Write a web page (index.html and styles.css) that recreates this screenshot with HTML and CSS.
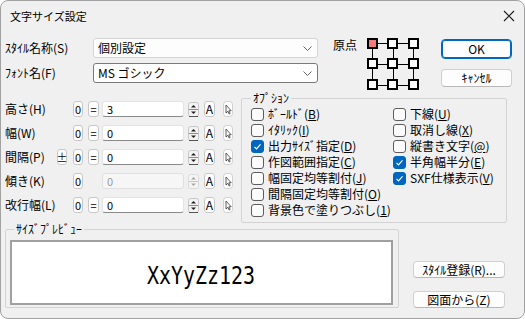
FILE: index.html
```html
<!DOCTYPE html>
<html lang="ja">
<head>
    <meta charset="UTF-8">
    <title>文字サイズ設定</title>
    <link rel="stylesheet" href="styles.css">
</head>
<body>
<div class="window">
    <div class="titlebar">
        <span class="title">文字サイズ設定</span>
        <svg class="close" width="12" height="12" viewBox="0 0 12 12"><path d="M1 1L11 11M11 1L1 11" stroke="#1a1a1a" stroke-width="1.1"/></svg>
    </div>

    <div class="top">
        <div class="fields">
            <div class="field">
                <label class="field-label">ｽﾀｲﾙ名称(S)</label>
                <div class="combo">個別設定<svg class="chevron" width="9" height="5" viewBox="0 0 9 5"><path d="M0.5 0.5L4.5 4.5L8.5 0.5" fill="none" stroke="#666"/></svg></div>
            </div>
            <div class="field">
                <label class="field-label">ﾌｫﾝﾄ名(F)</label>
                <div class="combo editable">MS ゴシック<svg class="chevron" width="9" height="5" viewBox="0 0 9 5"><path d="M0.5 0.5L4.5 4.5L8.5 0.5" fill="none" stroke="#666"/></svg></div>
            </div>
        </div>
        <div class="origin">
            <span class="origin-label">原点</span>
            <svg class="origin-grid" width="56" height="56" viewBox="0 0 56 56">
                <g stroke="#000" stroke-width="1">
                    <path d="M12 6.5H21M32 6.5H42M12 27.5H21M32 27.5H42M12 48.5H21M32 48.5H42"/>
                    <path d="M6.5 12V21M6.5 32V42M27.5 12V21M27.5 32V42M47.5 12V21M47.5 32V42"/>
                </g>
                <g stroke="#000" stroke-width="2" fill="#fff">
                    <rect x="2" y="2" width="9" height="9" fill="#f77b7b"/>
                    <rect x="22" y="2" width="9" height="9"/>
                    <rect x="43" y="2" width="9" height="9"/>
                    <rect x="2" y="22" width="9" height="9"/>
                    <rect x="22" y="22" width="9" height="9"/>
                    <rect x="43" y="22" width="9" height="9"/>
                    <rect x="2" y="43" width="9" height="9"/>
                    <rect x="22" y="43" width="9" height="9"/>
                    <rect x="43" y="43" width="9" height="9"/>
                </g>
            </svg>
        </div>
        <div class="actions">
            <button class="btn btn-primary">OK</button>
            <button class="btn btn-cancel">ｷｬﾝｾﾙ</button>
        </div>
    </div>

    <div class="middle">
        <div class="params">
            <div class="param-row">
                <span class="param-label">高さ(H)</span>
                <span class="pm-slot"></span>
                <span class="mini">0</span>
                <span class="mini eq">=</span>
                <span class="num-input">3</span>
                <svg class="spin" width="11" height="15" viewBox="0 0 11 15"><rect x="0.5" y="0.5" width="10" height="14" rx="2" fill="#f3f3f3" stroke="#c6c6c6"/><path d="M3 5.5H8L5.5 3Z" fill="#222"/><path d="M1 7.5H10" stroke="#8c8c8c"/><path d="M3 9.5H8L5.5 12Z" fill="#222"/><path d="M1 14.5H10" stroke="#555"/></svg>
                <span class="mini glyph">A</span>
                <svg class="pick" width="10" height="16" viewBox="0 0 10 16"><rect x="0.5" y="0.5" width="9" height="15" rx="3" fill="#fff" stroke="#cfcfcf"/><path d="M3 4V12L4.8 10.3L6.2 13L7.2 12.5L5.9 9.8H8.2Z" fill="#fff" stroke="#333" stroke-width="0.8" stroke-linejoin="round"/></svg>
            </div>
            <div class="param-row">
                <span class="param-label">幅(W)</span>
                <span class="pm-slot"></span>
                <span class="mini">0</span>
                <span class="mini eq">=</span>
                <span class="num-input">0</span>
                <svg class="spin" width="11" height="15" viewBox="0 0 11 15"><rect x="0.5" y="0.5" width="10" height="14" rx="2" fill="#f3f3f3" stroke="#c6c6c6"/><path d="M3 5.5H8L5.5 3Z" fill="#222"/><path d="M1 7.5H10" stroke="#8c8c8c"/><path d="M3 9.5H8L5.5 12Z" fill="#222"/><path d="M1 14.5H10" stroke="#555"/></svg>
                <span class="mini glyph">A</span>
                <svg class="pick" width="10" height="16" viewBox="0 0 10 16"><rect x="0.5" y="0.5" width="9" height="15" rx="3" fill="#fff" stroke="#cfcfcf"/><path d="M3 4V12L4.8 10.3L6.2 13L7.2 12.5L5.9 9.8H8.2Z" fill="#fff" stroke="#333" stroke-width="0.8" stroke-linejoin="round"/></svg>
            </div>
            <div class="param-row">
                <span class="param-label">間隔(P)</span>
                <span class="mini pm">±</span>
                <span class="mini">0</span>
                <span class="mini eq">=</span>
                <span class="num-input">0</span>
                <svg class="spin" width="11" height="15" viewBox="0 0 11 15"><rect x="0.5" y="0.5" width="10" height="14" rx="2" fill="#f3f3f3" stroke="#c6c6c6"/><path d="M3 5.5H8L5.5 3Z" fill="#222"/><path d="M1 7.5H10" stroke="#8c8c8c"/><path d="M3 9.5H8L5.5 12Z" fill="#222"/><path d="M1 14.5H10" stroke="#555"/></svg>
                <span class="mini glyph">A</span>
                <svg class="pick" width="10" height="16" viewBox="0 0 10 16"><rect x="0.5" y="0.5" width="9" height="15" rx="3" fill="#fff" stroke="#cfcfcf"/><path d="M3 4V12L4.8 10.3L6.2 13L7.2 12.5L5.9 9.8H8.2Z" fill="#fff" stroke="#333" stroke-width="0.8" stroke-linejoin="round"/></svg>
            </div>
            <div class="param-row">
                <span class="param-label">傾き(K)</span>
                <span class="pm-slot"></span>
                <span class="mini">0</span>
                <span class="eq-slot"></span>
                <span class="num-input disabled">0</span>
                <svg class="spin" width="11" height="15" viewBox="0 0 11 15"><rect x="0.5" y="0.5" width="10" height="14" rx="2" fill="#f5f5f5" stroke="#dadada"/><path d="M3 5.5H8L5.5 3Z" fill="#a8a8a8"/><path d="M1 7.5H10" stroke="#c4c4c4"/><path d="M3 9.5H8L5.5 12Z" fill="#a8a8a8"/></svg>
                <span class="mini glyph">A</span>
                <svg class="pick" width="10" height="16" viewBox="0 0 10 16"><rect x="0.5" y="0.5" width="9" height="15" rx="3" fill="#fff" stroke="#cfcfcf"/><path d="M3 4V12L4.8 10.3L6.2 13L7.2 12.5L5.9 9.8H8.2Z" fill="#fff" stroke="#333" stroke-width="0.8" stroke-linejoin="round"/></svg>
            </div>
            <div class="param-row">
                <span class="param-label">改行幅(L)</span>
                <span class="pm-slot"></span>
                <span class="mini">0</span>
                <span class="mini eq">=</span>
                <span class="num-input">0</span>
                <svg class="spin" width="11" height="15" viewBox="0 0 11 15"><rect x="0.5" y="0.5" width="10" height="14" rx="2" fill="#f3f3f3" stroke="#c6c6c6"/><path d="M3 5.5H8L5.5 3Z" fill="#222"/><path d="M1 7.5H10" stroke="#8c8c8c"/><path d="M3 9.5H8L5.5 12Z" fill="#222"/><path d="M1 14.5H10" stroke="#555"/></svg>
                <span class="mini glyph">A</span>
                <svg class="pick" width="10" height="16" viewBox="0 0 10 16"><rect x="0.5" y="0.5" width="9" height="15" rx="3" fill="#fff" stroke="#cfcfcf"/><path d="M3 4V12L4.8 10.3L6.2 13L7.2 12.5L5.9 9.8H8.2Z" fill="#fff" stroke="#333" stroke-width="0.8" stroke-linejoin="round"/></svg>
            </div>
        </div>

        <fieldset class="group options">
            <legend>ｵﾌﾟｼｮﾝ</legend>
            <div class="option-cols">
                <div class="option-col first">
                    <div class="check"><span class="box"></span>ﾎﾞｰﾙﾄﾞ(<u>B</u>)</div>
                    <div class="check"><span class="box"></span>ｲﾀﾘｯｸ(<u>I</u>)</div>
                    <div class="check"><span class="box checked"></span>出力ｻｲｽﾞ指定(<u>D</u>)</div>
                    <div class="check"><span class="box"></span>作図範囲指定(<u>C</u>)</div>
                    <div class="check"><span class="box"></span>幅固定均等割付(<u>J</u>)</div>
                    <div class="check"><span class="box"></span>間隔固定均等割付(<u>O</u>)</div>
                    <div class="check"><span class="box"></span>背景色で塗りつぶし(<u>1</u>)</div>
                </div>
                <div class="option-col">
                    <div class="check"><span class="box"></span>下線(<u>U</u>)</div>
                    <div class="check"><span class="box"></span>取消し線(<u>X</u>)</div>
                    <div class="check"><span class="box"></span>縦書き文字(<u>@</u>)</div>
                    <div class="check"><span class="box checked"></span>半角幅半分(<u>E</u>)</div>
                    <div class="check"><span class="box checked"></span>SXF仕様表示(<u>V</u>)</div>
                </div>
            </div>
        </fieldset>
    </div>

    <div class="bottom">
        <fieldset class="group preview">
            <legend>ｻｲｽﾞﾌﾟﾚﾋﾞｭｰ</legend>
            <div class="preview-box"><span class="preview-text">XxYyZz123</span></div>
        </fieldset>
        <div class="side-buttons">
            <button class="btn">ｽﾀｲﾙ登録(R)...</button>
            <button class="btn">図面から(Z)</button>
        </div>
    </div>
</div>
</body>
</html>
```

FILE: styles.css
```css
* {
    box-sizing: border-box;
}
body {
    margin: 0;
    background: #fff;
    font-family: "Noto Sans CJK JP", "Noto Sans", sans-serif;
    font-size: 12px;
    color: #000;
}
.window {
    width: 525px;
    height: 319px;
    border: 1px solid #a2a2a2;
    border-radius: 8px;
    background: #f0f0f0;
    overflow: hidden;
}
.titlebar {
    height: 29px;
    display: flex;
    align-items: center;
    justify-content: space-between;
    padding: 0 9px 0 9px;
}
.title {
    font-size: 11px;
    line-height: 16px;
}

/* top: style / font / origin / OK */
.top {
    height: 60px;
    display: flex;
}
.fields {
    width: 317px;
    padding: 8px 0 0 4px;
    display: flex;
    flex-direction: column;
    gap: 5px;
}
.field {
    display: flex;
    align-items: center;
    height: 20px;
}
.field-label {
    width: 88px;
    line-height: 16px;
}
.combo {
    flex: 1;
    height: 20px;
    display: flex;
    align-items: center;
    justify-content: space-between;
    padding: 0 5px 0 4px;
    background: #fdfdfd;
    border: 1px solid #d4d4d4;
    border-radius: 3px;
    line-height: 16px;
}
.combo.editable {
    background: #fff;
    border-color: #7a7a7a;
}
.origin {
    display: flex;
    align-items: flex-start;
    margin-left: 15px;
}
.origin-label {
    line-height: 16px;
    margin-top: 7px;
}
.origin-grid {
    margin: 7px 0 0 9px;
}
.actions {
    margin-left: auto;
    margin-right: 12px;
    padding-top: 9px;
    display: flex;
    flex-direction: column;
    gap: 10px;
}
.btn {
    font-family: inherit;
    font-size: 12px;
    line-height: 14px;
    padding: 0;
    color: #000;
    background: #fdfdfd;
    border: 1px solid #d0d0d0;
    border-bottom-color: #b8b8b8;
    border-radius: 4px;
}
.btn-primary {
    width: 71px;
    height: 20px;
    border: 1px solid #0067c0;
    box-shadow: inset 0 0 0 1px #0067c0;
}
.btn-cancel {
    width: 71px;
    height: 18px;
}

/* middle: numeric params + options */
.middle {
    height: 131px;
    display: flex;
    align-items: flex-start;
}
.params {
    width: 240px;
    padding: 7px 0 0 4px;
}
.param-row {
    height: 24px;
    display: flex;
    align-items: center;
}
.param-label {
    width: 52px;
    line-height: 16px;
}
.pm-slot {
    width: 10px;
}
.mini {
    width: 10px;
    height: 16px;
    margin-left: 6px;
    display: flex;
    align-items: center;
    justify-content: center;
    background: #fff;
    border: 1px solid #c8c8c8;
    border-radius: 3px;
    font-size: 11px;
    line-height: 14px;
}
.mini.pm {
    margin-left: 0;
}
.pm-slot + .mini {
    margin-left: 6px;
}
.mini.eq {
    width: 11px;
    margin-left: 5px;
}
.eq-slot {
    width: 11px;
    margin-left: 5px;
}
.num-input {
    width: 82px;
    height: 16px;
    margin-left: 3px;
    padding-left: 4px;
    background: #fff;
    border: 1px solid #e4e4e4;
    border-bottom-color: #8a8a8a;
    border-radius: 3px;
    font-size: 11px;
    line-height: 14px;
}
.num-input.disabled {
    background: #f6f6f6;
    border-color: #e0e0e0;
    color: #9a9a9a;
}
.spin {
    margin-left: 4px;
}
.mini.glyph {
    width: 11px;
    margin-left: 5px;
    font-size: 12px;
}
.pick {
    margin-left: 8px;
}

.group {
    margin: 0;
    border: 1px solid #d3d3d3;
    border-radius: 2px;
}
.group legend {
    padding: 0 2px;
    line-height: 16px;
}
.options {
    width: 266px;
    padding: 0 8px 4px 9px;
}
.option-cols {
    display: flex;
}
.option-col.first {
    width: 142px;
}
.check {
    height: 16px;
    display: flex;
    align-items: center;
    white-space: nowrap;
    line-height: 16px;
}
.check u {
    text-underline-offset: 1px;
}
.box {
    width: 13px;
    height: 13px;
    margin-right: 4px;
    border: 1px solid #5c5c5c;
    border-radius: 3px;
    background: #fbfbfb;
    flex-shrink: 0;
}
.box.checked {
    border-color: #0067c0;
    background: #0067c0 url("data:image/svg+xml,%3Csvg xmlns='http://www.w3.org/2000/svg' width='11' height='11' viewBox='0 0 11 11'%3E%3Cpath d='M2.5 5.8L4.5 7.8L8.5 3.3' fill='none' stroke='white' stroke-width='1.2'/%3E%3C/svg%3E") center no-repeat;
}

/* bottom: preview + buttons */
.bottom {
    display: flex;
    align-items: flex-start;
}
.preview {
    width: 394px;
    margin-left: 4px;
    padding: 3px 5px 2px 4px;
}
.preview legend {
    margin-left: 4px;
}
.preview-box {
    height: 65px;
    background: #fff;
    border: 2px solid #a0a0a0;
    display: flex;
    align-items: center;
    justify-content: center;
    padding-top: 6px;
}
.preview-text {
    font-family: "DejaVu Sans Mono", monospace;
    font-size: 24px;
    line-height: 28px;
    transform: scaleX(0.83);
}
.side-buttons {
    margin-left: 14px;
    padding-top: 40px;
    display: flex;
    flex-direction: column;
    gap: 13px;
}
.side-buttons .btn {
    width: 92px;
    height: 17px;
}
```
